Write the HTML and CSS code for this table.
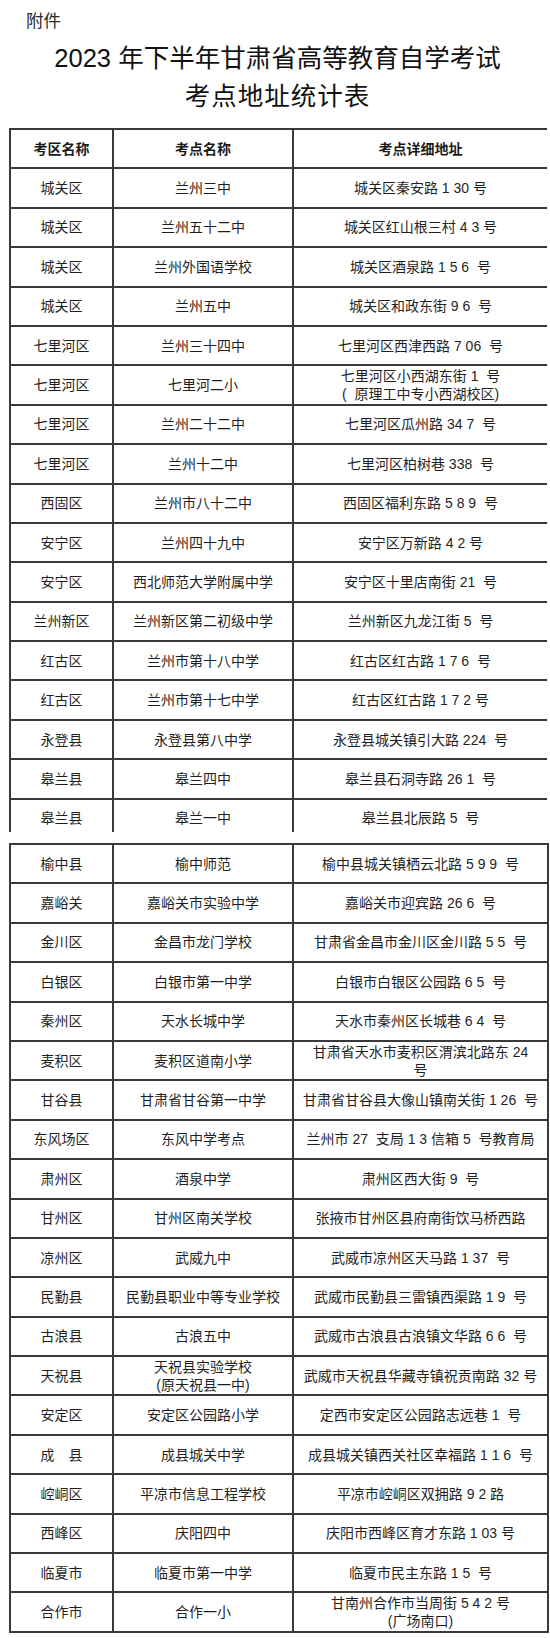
FILE: index.html
```html
<!DOCTYPE html>
<html lang="zh-CN">
<head>
<meta charset="utf-8">
<title>考点地址统计表</title>
<link rel="stylesheet" href="styles.css">
</head>
<body>
<main class="page">
  <p class="attach">附件</p>
  <h1 class="title">2023 年下半年甘肃省高等教育自学考试<br><span class="title-sub">考点地址统计表</span></h1>

  <div class="sheet sheet-first">
    <table class="grid">
      <colgroup><col class="c1"><col class="c2"><col class="c3"></colgroup>
      <thead>
        <tr><th>考区名称</th><th>考点名称</th><th>考点详细地址</th></tr>
      </thead>
      <tbody>
        <tr><td>城关区</td><td>兰州三中</td><td>城关区秦安路 1 30 号</td></tr>
        <tr><td>城关区</td><td>兰州五十二中</td><td>城关区红山根三村 4 3 号</td></tr>
        <tr><td>城关区</td><td>兰州外国语学校</td><td>城关区酒泉路 1 5 6  号</td></tr>
        <tr><td>城关区</td><td>兰州五中</td><td>城关区和政东街 9 6  号</td></tr>
        <tr><td>七里河区</td><td>兰州三十四中</td><td>七里河区西津西路 7 06  号</td></tr>
        <tr><td>七里河区</td><td>七里河二小</td><td>七里河区小西湖东街 1  号<br>(  原理工中专小西湖校区)</td></tr>
        <tr><td>七里河区</td><td>兰州二十二中</td><td>七里河区瓜州路 34 7  号</td></tr>
        <tr><td>七里河区</td><td>兰州十二中</td><td>七里河区柏树巷 338  号</td></tr>
        <tr><td>西固区</td><td>兰州市八十二中</td><td>西固区福利东路 5 8 9  号</td></tr>
        <tr><td>安宁区</td><td>兰州四十九中</td><td>安宁区万新路 4 2 号</td></tr>
        <tr><td>安宁区</td><td>西北师范大学附属中学</td><td>安宁区十里店南街 21  号</td></tr>
        <tr><td>兰州新区</td><td>兰州新区第二初级中学</td><td>兰州新区九龙江街 5  号</td></tr>
        <tr><td>红古区</td><td>兰州市第十八中学</td><td>红古区红古路 1 7 6  号</td></tr>
        <tr><td>红古区</td><td>兰州市第十七中学</td><td>红古区红古路 1 7 2 号</td></tr>
        <tr><td>永登县</td><td>永登县第八中学</td><td>永登县城关镇引大路 224  号</td></tr>
        <tr><td>皋兰县</td><td>皋兰四中</td><td>皋兰县石洞寺路 26 1  号</td></tr>
        <tr><td>皋兰县</td><td>皋兰一中</td><td>皋兰县北辰路 5  号</td></tr>
      </tbody>
    </table>
  </div>

  <div class="sheet sheet-second">
    <table class="grid">
      <colgroup><col class="c1"><col class="c2"><col class="c3"></colgroup>
      <tbody>
        <tr><td>榆中县</td><td>榆中师范</td><td>榆中县城关镇栖云北路 5 9 9  号</td></tr>
        <tr><td>嘉峪关</td><td>嘉峪关市实验中学</td><td>嘉峪关市迎宾路 26 6  号</td></tr>
        <tr><td>金川区</td><td>金昌市龙门学校</td><td>甘肃省金昌市金川区金川路 5 5  号</td></tr>
        <tr><td>白银区</td><td>白银市第一中学</td><td>白银市白银区公园路 6 5  号</td></tr>
        <tr><td>秦州区</td><td>天水长城中学</td><td>天水市秦州区长城巷 6 4  号</td></tr>
        <tr><td>麦积区</td><td>麦积区道南小学</td><td>甘肃省天水市麦积区渭滨北路东 24<br>号</td></tr>
        <tr><td>甘谷县</td><td>甘肃省甘谷第一中学</td><td>甘肃省甘谷县大像山镇南关街 1 26  号</td></tr>
        <tr><td>东风场区</td><td>东风中学考点</td><td>兰州市 27  支局 1 3 信箱 5  号教育局</td></tr>
        <tr><td>肃州区</td><td>酒泉中学</td><td>肃州区西大街 9  号</td></tr>
        <tr><td>甘州区</td><td>甘州区南关学校</td><td>张掖市甘州区县府南街饮马桥西路</td></tr>
        <tr><td>凉州区</td><td>武威九中</td><td>武威市凉州区天马路 1 37  号</td></tr>
        <tr><td>民勤县</td><td>民勤县职业中等专业学校</td><td>武威市民勤县三雷镇西渠路 1 9  号</td></tr>
        <tr><td>古浪县</td><td>古浪五中</td><td>武威市古浪县古浪镇文华路 6 6  号</td></tr>
        <tr><td>天祝县</td><td>天祝县实验学校<br>(原天祝县一中)</td><td>武威市天祝县华藏寺镇祝贡南路 32 号</td></tr>
        <tr><td>安定区</td><td>安定区公园路小学</td><td>定西市安定区公园路志远巷 1  号</td></tr>
        <tr><td>成　县</td><td>成县城关中学</td><td>成县城关镇西关社区幸福路 1 1 6  号</td></tr>
        <tr><td>崆峒区</td><td>平凉市信息工程学校</td><td>平凉市崆峒区双拥路 9 2 路</td></tr>
        <tr><td>西峰区</td><td>庆阳四中</td><td>庆阳市西峰区育才东路 1 03 号</td></tr>
        <tr><td>临夏市</td><td>临夏市第一中学</td><td>临夏市民主东路 1 5  号</td></tr>
        <tr><td>合作市</td><td>合作一小</td><td>甘南州合作市当周街 5 4 2 号<br>(广场南口)</td></tr>
      </tbody>
    </table>
  </div>
</main>
</body>
</html>
```

FILE: styles.css
```css
html, body {
  margin: 0;
  padding: 0;
  background: #ffffff;
}

body {
  font-family: "Liberation Sans", "Noto Sans CJK SC", sans-serif;
  color: #1f1f1f;
}

.page {
  width: 550px;
}

.attach {
  margin: 0;
  padding: 9px 0 0 26px;
  font-size: 17.5px;
  line-height: 24px;
  color: #2a2a2a;
}

.title {
  margin: 6px 4px 13px 9px;
  width: 537px;
  text-align: center;
  font-size: 25.5px;
  line-height: 38px;
  font-weight: 400;
  color: #111111;
}

.title-sub {
  letter-spacing: 1px;
}

.sheet {
  margin-left: 9px;
  width: 538px;
}

.sheet-first {
  height: 704px;
  overflow: hidden;
}

.sheet-second {
  margin-top: 11px;
}

.grid {
  width: 538px;
  table-layout: fixed;
  border-collapse: collapse;
  font-size: 14px;
  line-height: 18px;
}

.c1 { width: 103px; }
.c2 { width: 180px; }
.c3 { width: 255px; }

.grid tr {
  height: 39.4px;
}

.grid th,
.grid td {
  border: 2px solid #3a3a3a;
  padding: 0 1px;
  text-align: center;
  vertical-align: middle;
  white-space: pre;
}

.grid th {
  font-weight: 700;
  color: #1a1a1a;
}
```
